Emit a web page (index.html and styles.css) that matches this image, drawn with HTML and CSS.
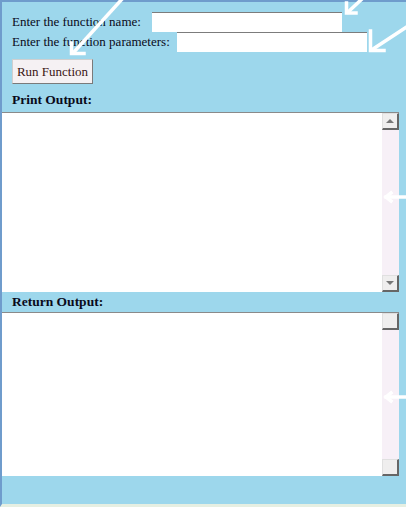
FILE: index.html
```html
<!DOCTYPE html>
<html>
<head>
<meta charset="utf-8">
<link rel="stylesheet" href="styles.css">
</head>
<body>
<div class="frame">
  <div class="controls">
    <div class="row">
      <span class="lbl">Enter the function name:</span>
      <span class="field f1"></span>
    </div>
    <div class="row">
      <span class="lbl">Enter the function parameters:</span>
      <span class="field f2"></span>
    </div>
    <div class="btn">Run Function</div>
  </div>
  <div class="band band1">Print Output:</div>
  <div class="area area1">
    <div class="text"></div>
    <div class="sb">
      <div class="sbtn"><span class="up"></span></div>
      <div class="track"></div>
      <div class="sbtn"><span class="down"></span></div>
    </div>
  </div>
  <div class="band band2">Return Output:</div>
  <div class="area area2">
    <div class="text"></div>
    <div class="sb">
      <div class="sbtn"></div>
      <div class="track"></div>
      <div class="sbtn"></div>
    </div>
  </div>
  <div class="foot"></div>
</div>
<svg class="overlay" width="406" height="507" viewBox="0 0 406 507">
  <g fill="none" stroke="#ffffff" stroke-width="3.5" stroke-linecap="square">
    <line x1="123" y1="-2" x2="74" y2="52"/>
    <polyline points="71.5,43 71.5,53.5 84,53.5"/>
    <line x1="363" y1="-2" x2="348" y2="12"/>
    <polyline points="346.5,3 346.5,13 356,13"/>
    <line x1="408" y1="26" x2="373" y2="49"/>
    <polyline points="370.5,31 370.5,50.5 384,50.5"/>
    <line x1="408" y1="197" x2="386" y2="197"/>
    <polyline points="391,193 386,197 391,201"/>
    <line x1="408" y1="397" x2="386" y2="397"/>
    <polyline points="391,393 386,397 391,401"/>
  </g>
</svg>
</body>
</html>
```

FILE: styles.css
```css
html, body {
  margin: 0;
  padding: 0;
  background: #9dd7ec;
}
body {
  width: 406px;
  height: 507px;
  overflow: hidden;
  position: relative;
  font-family: "Liberation Serif", "Times New Roman", serif;
  font-size: 13px;
  color: #0a0a1a;
}
.frame {
  box-sizing: border-box;
  width: 406px;
  height: 507px;
  border-top: 2px solid #6f9ccc;
  border-left: 2px solid #6f9ccc;
  border-bottom: 3px solid #e6efe2;
  background: #9dd7ec;
  display: flex;
  flex-direction: column;
}
.controls {
  padding: 10px 0 0 10px;
  display: flex;
  flex-direction: column;
  align-items: flex-start;
}
.row {
  height: 20px;
  display: flex;
  align-items: center;
}
.lbl {
  line-height: 20px;
}
.field {
  display: block;
  height: 19px;
  background: #ffffff;
  border-top: 1px solid #7c7c7c;
}
.f1 {
  width: 190px;
  margin-left: 11px;
}
.f2 {
  width: 190px;
  margin-left: 7px;
}
.btn {
  box-sizing: border-box;
  margin-top: 7px;
  width: 81px;
  height: 25px;
  background: #f5f1f3;
  border: 1px solid #cfcfcf;
  border-right-color: #7a7a7a;
  border-bottom-color: #7a7a7a;
  display: flex;
  align-items: center;
  justify-content: center;
  color: #3a1414;
  font-size: 13px;
}
.band {
  padding-left: 10px;
  font-weight: bold;
  font-size: 13.5px;
  display: flex;
  align-items: center;
}
.band1 {
  height: 28px;
  padding-top: 4px;
  box-sizing: border-box;
}
.band2 {
  height: 20px;
}
.area {
  width: 397px;
  display: flex;
  background: #ffffff;
  border-top: 1px solid #8a8a8a;
  box-sizing: border-box;
}
.area1 {
  height: 180px;
}
.area2 {
  height: 164px;
}
.text {
  flex: 1;
}
.sb {
  width: 17px;
  display: flex;
  flex-direction: column;
}
.sbtn {
  box-sizing: border-box;
  height: 17px;
  background: #efeeee;
  border: 1px solid #e0e0e0;
  border-right: 2px solid #666666;
  border-bottom: 2px solid #666666;
  display: flex;
  align-items: center;
  justify-content: center;
}
.track {
  flex: 1;
  background: #f7f0f7;
}
.up {
  width: 0;
  height: 0;
  border-left: 4px solid transparent;
  border-right: 4px solid transparent;
  border-bottom: 4px solid #777777;
}
.down {
  width: 0;
  height: 0;
  border-left: 4px solid transparent;
  border-right: 4px solid transparent;
  border-top: 4px solid #777777;
}
.foot {
  flex: 1;
}
.overlay {
  position: absolute;
  left: 0;
  top: 0;
  pointer-events: none;
}
```
